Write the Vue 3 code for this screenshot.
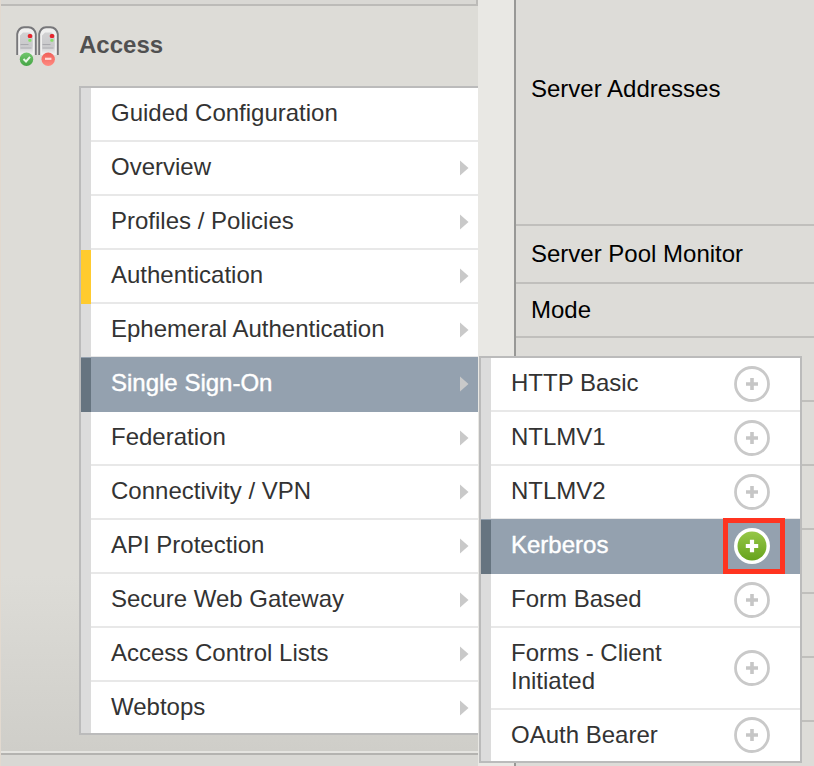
<script setup>
const menu = [
  { label: 'Guided Configuration', plain: true },
  { label: 'Overview' },
  { label: 'Profiles / Policies' },
  { label: 'Authentication', cls: 'current' },
  { label: 'Ephemeral Authentication' },
  { label: 'Single Sign-On', cls: 'active' },
  { label: 'Federation' },
  { label: 'Connectivity / VPN' },
  { label: 'API Protection' },
  { label: 'Secure Web Gateway' },
  { label: 'Access Control Lists' },
  { label: 'Webtops' }
]
const submenu = [
  { label: 'HTTP Basic' },
  { label: 'NTLMV1' },
  { label: 'NTLMV2' },
  { label: 'Kerberos', cls: 'active' },
  { label: 'Form Based' },
  { label: 'Forms - Client Initiated', cls: 'tall' },
  { label: 'OAuth Bearer' }
]
</script>

<template>
  <div class="page">
    <aside class="sidebar">
      <div class="above"></div>
      <div class="section">
        <header class="heading">
          <svg class="servers" width="46" height="44" viewBox="0 0 46 44">
            <defs>
              <linearGradient id="body" x1="0" y1="0" x2="0" y2="1">
                <stop offset="0" stop-color="#d2d2d3" />
                <stop offset=".6" stop-color="#c9c9cb" />
                <stop offset="1" stop-color="#f4f4f4" />
              </linearGradient>
              <linearGradient id="ok" x1="0" y1="0" x2="0" y2="1">
                <stop offset="0" stop-color="#72c66e" />
                <stop offset="1" stop-color="#45a545" />
              </linearGradient>
              <linearGradient id="no" x1="0" y1="0" x2="0" y2="1">
                <stop offset="0" stop-color="#f0605a" />
                <stop offset="1" stop-color="#ff8a80" />
              </linearGradient>
            </defs>
            <g v-for="x in [0, 22]" :key="x" :transform="`translate(${x} 0)`">
              <path d="M2.2 30V9Q3.500 2.500 9 2.200H13.500Q19.500 2.500 20.800 9V30" fill="#f0f0ef" stroke="#77777a" stroke-width="1.900" />
              <path d="M5 30V10.500L8 7.500H14.500L17.800 10.500V30z" fill="url(#body)" />
              <path d="M5.500 19.500H13.500M5.500 23H16.500" stroke="#a9a9ae" stroke-width="1.100" />
              <rect x="12.800" y="9" width="4.400" height="4" rx="1.500" fill="#e5252d" />
              <rect x="13.300" y="14" width="3.200" height="2.800" rx="1" fill="#87df69" />
            </g>
            <circle cx="11.500" cy="34.200" r="6.700" fill="url(#ok)" />
            <path d="M8.500 34L11 36.500L15 31.800" fill="none" stroke="#e9f7e7" stroke-width="2" />
            <circle cx="33.200" cy="34.200" r="6.700" fill="url(#no)" />
            <path d="M30 33.800H36.400" stroke="#ffd9d5" stroke-width="2.200" />
          </svg>
          <h1>Access</h1>
        </header>
        <ul class="menu main">
          <li v-for="m in menu" :key="m.label" :class="m.cls">
            <span class="label">{{ m.label }}</span>
            <svg v-if="!m.plain" class="arrow" width="9" height="16" viewBox="0 0 9 16"><path d="M0 .5L8.500 8L0 15.500z" fill="#c9c9c9" /></svg>
          </li>
        </ul>
      </div>
    </aside>

    <main class="detail">
      <div class="cell addresses">Server Addresses</div>
      <div class="cell monitor">Server Pool Monitor</div>
      <div class="cell mode">Mode</div>
      <div v-for="n in 7" :key="n" class="cell blank"></div>
    </main>

    <ul class="menu flyout">
      <li v-for="s in submenu" :key="s.label" :class="s.cls">
        <span class="label">{{ s.label }}</span>
        <svg v-if="s.cls === 'active'" class="add" width="38" height="38" viewBox="0 0 38 38">
          <defs>
            <linearGradient id="green" x1="0" y1="0" x2="0" y2="1">
              <stop offset="0" stop-color="#96c748" />
              <stop offset="1" stop-color="#66a31c" />
            </linearGradient>
          </defs>
          <circle cx="19" cy="19" r="18" fill="#fff" />
          <circle cx="19" cy="19" r="14.500" fill="url(#green)" />
          <path d="M19 12.800V25.200M12.800 19H25.200" stroke="#fff" stroke-width="4.200" />
        </svg>
        <svg v-else class="add" width="38" height="38" viewBox="0 0 38 38">
          <circle cx="19" cy="19" r="16.500" fill="#fff" stroke="#c9c9c9" stroke-width="2.800" />
          <path d="M19 13V25M13 19H25" stroke="#c6c6c6" stroke-width="3.600" />
        </svg>
        <span v-if="s.cls === 'active'" class="highlight"></span>
      </li>
    </ul>
  </div>
</template>

<style>
body {
  margin: 0;
  overflow: hidden;
}
</style>

<style scoped>
* {
  box-sizing: border-box;
}
.page {
  position: relative;
  display: flex;
  gap: 36px;
  width: 814px;
  height: 766px;
  overflow: hidden;
  background: #e9e8e4;
  font-family: "Liberation Sans", Arial, sans-serif;
  font-size: 24px;
  color: #333;
}
.sidebar {
  width: 478px;
  background: #d9d8d4;
  border-left: 1px solid #e2d9cf;
}
.above {
  height: 4px;
  border-right: 2px solid #bcbbb8;
}
.section {
  height: 751px;
  border-top: 2px solid #bcbbb8;
  border-bottom: 2px solid #b4b3b0;
  box-shadow: inset 0 -2px 0 #e5e4e0;
  background: linear-gradient(#dddcd7 0 570px, #cfcec9 745px);
}
.heading {
  display: flex;
  align-items: flex-start;
  height: 80px;
  padding: 19px 0 0 14px;
}
.heading h1 {
  margin: 6px 0 0 18px;
  font-size: 24px;
  line-height: 28px;
  color: #505050;
}
.menu {
  margin: 0;
  padding: 0;
  list-style: none;
  border: 2px solid #bbb;
  background: #fff;
}
.menu.main {
  margin-left: 78px;
  border-right: 0;
}
.menu li {
  position: relative;
  display: flex;
  align-items: center;
  justify-content: space-between;
  height: 54px;
  padding-left: 20px;
  padding-bottom: 2px;
  border-left: 10px solid #dcdcdc;
  box-shadow: inset 0 -2px 0 #e8e8e8;
}
.menu li:last-child {
  height: 51px;
  padding-bottom: 0;
  box-shadow: none;
}
.menu li.current {
  border-left-color: #ffcb2f;
}
.menu li.active {
  border-left-color: #667480;
  background: #94a1af;
  box-shadow: 0 -1px 0 #94a1af;
  color: #fff;
  -webkit-text-stroke: 0.4px #fff;
}
.label {
  margin-top: -2px;
  line-height: 28px;
  white-space: nowrap;
}
.arrow {
  margin-right: 9px;
}
.menu.flyout {
  position: absolute;
  left: 479px;
  top: 356px;
  width: 323px;
}
.flyout li.tall {
  height: 82px;
}
.tall .label {
  width: 170px;
  white-space: normal;
}
.add {
  flex: none;
  margin: -1px 29px 0 0;
}
.highlight {
  position: absolute;
  left: 232px;
  top: -2px;
  width: 62px;
  height: 56px;
  border: 5px solid #ff3420;
}
.detail {
  width: 300px;
  background: #dddcd8;
  border-left: 2px solid #989896;
}
.cell {
  display: flex;
  align-items: center;
  height: 64px;
  padding-left: 15px;
  border-bottom: 2px solid #c0bfbc;
  line-height: 28px;
  color: #000;
}
.cell.addresses {
  height: 226px;
  padding-bottom: 46px;
}
.cell.monitor {
  height: 58px;
  padding-bottom: 1px;
}
.cell.mode {
  height: 54px;
}
</style>
